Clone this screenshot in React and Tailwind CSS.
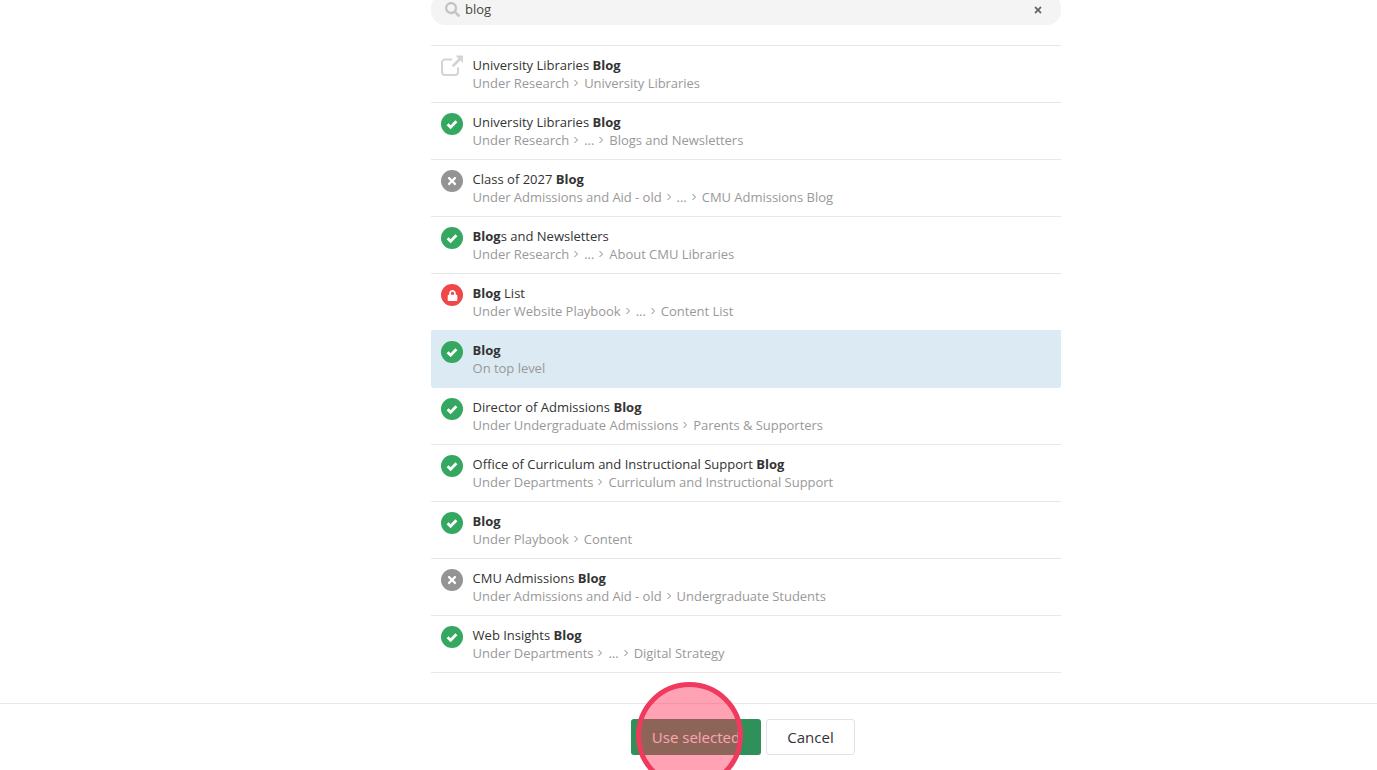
import { FaTimes, FaLock, FaSearch } from "react-icons/fa"

const rows = [
  { icon: "link", title: ["University Libraries ", <b key="b">Blog</b>], path: ["Under Research", "University Libraries"] },
  { icon: "ok", title: ["University Libraries ", <b key="b">Blog</b>], path: ["Under Research", "...", "Blogs and Newsletters"] },
  { icon: "off", title: ["Class of 2027 ", <b key="b">Blog</b>], path: ["Under Admissions and Aid - old", "...", "CMU Admissions Blog"] },
  { icon: "ok", title: [<b key="b">Blog</b>, "s and Newsletters"], path: ["Under Research", "...", "About CMU Libraries"] },
  { icon: "lock", title: [<b key="b">Blog</b>, " List"], path: ["Under Website Playbook", "...", "Content List"] },
  { icon: "ok", title: [<b key="b">Blog</b>], text: "On top level", selected: true },
  { icon: "ok", title: ["Director of Admissions ", <b key="b">Blog</b>], path: ["Under Undergraduate Admissions", "Parents & Supporters"] },
  { icon: "ok", title: ["Office of Curriculum and Instructional Support ", <b key="b">Blog</b>], path: ["Under Departments", "Curriculum and Instructional Support"] },
  { icon: "ok", title: [<b key="b">Blog</b>], path: ["Under Playbook", "Content"] },
  { icon: "off", title: ["CMU Admissions ", <b key="b">Blog</b>], path: ["Under Admissions and Aid - old", "Undergraduate Students"] },
  { icon: "ok", title: ["Web Insights ", <b key="b">Blog</b>], path: ["Under Departments", "...", "Digital Strategy"] },
]

function StatusIcon({ type }) {
  if (type === "link") {
    return (
      <svg width="24" height="22" viewBox="0 0 24 22" fill="none" className="text-[#d4d4d4] -mt-[1px] -ml-[1px]">
        <path d="M18 12.5V17a3 3 0 0 1-3 3H5a3 3 0 0 1-3-3V7.5a3 3 0 0 1 3-3h7" stroke="currentColor" strokeWidth="2" />
        <path d="M15.5 0.5H23V8l-2.6-2.6-6.7 6.9-2-2 6.8-6.9z" fill="currentColor" />
      </svg>
    )
  }
  const bg = type === "ok" ? "bg-[#34a761]" : type === "off" ? "bg-[#949494]" : "bg-[#f04747]"
  return (
    <div className={`w-[22px] h-[22px] rounded-full flex items-center justify-center text-white ${bg}`}>
      {type === "ok" && (
        <svg width="14" height="12" viewBox="0 0 14 12" fill="none">
          <path d="M2.6 6.2l3 3 5.8-6" stroke="currentColor" strokeWidth="2.8" />
        </svg>
      )}
      {type === "off" && <FaTimes size={12} />}
      {type === "lock" && <FaLock size={11} />}
    </div>
  )
}

function Row({ row }) {
  return (
    <div className={`flex border-b pl-[10px] ${row.selected ? "bg-[#dbeaf3] border-[#dbeaf3] rounded-[3px] -mt-[1px] h-[58px] pt-[11px]" : "h-[57px] pt-[10px] border-[#e8e8e8]"}`}>
      <div className="w-[31.6px] shrink-0">
        <StatusIcon type={row.icon} />
      </div>
      <div className="text-[13px] leading-[18px]">
        <div className="text-[#333] [&_b]:font-bold">{row.title}</div>
        <div className="text-[#999] flex items-center tracking-[-0.03px]">
          {row.text}
          {row.path &&
            row.path.map((p, i) => (
              <span key={i} className="flex items-center">
                {i > 0 && (
                  <svg width="15" height="10" viewBox="0 0 15 10" fill="none" className="text-[#888]">
                    <path d="M5.5 2l3 3-3 3" stroke="currentColor" strokeWidth="1" />
                  </svg>
                )}
                {p}
              </span>
            ))}
        </div>
      </div>
    </div>
  )
}

export default function App() {
  return (
    <div className="relative h-[770px] overflow-hidden bg-white flex flex-col font-['Open_Sans',sans-serif]">
      <div className="flex-1 pl-[115px]">
        <div className="w-[630px] mx-auto">
          <div className="h-[31px] -mt-[6px] rounded-[14px] bg-[#f4f4f4] flex items-center pl-[14px] pr-[18px] text-[13px] text-[#444]">
            <FaSearch size={15} className="text-[#c4c4c4] mr-[5px]" />
            <span className="flex-1">blog</span>
            <FaTimes size={10} className="text-[#666]" />
          </div>
          <div className="mt-[20px] border-t border-[#e8e8e8]">
            {rows.map((row, i) => (
              <Row key={i} row={row} />
            ))}
          </div>
        </div>
      </div>
      <div className="h-[67px] border-t border-[#e8e8e8] flex justify-center gap-[5px] pt-[15px] pl-[109px] text-[15px]">
        <button className="w-[130px] h-[36px] rounded-[3px] bg-[#2f9159] text-white">Use selected</button>
        <button className="w-[89px] h-[36px] rounded-[3px] border border-[#e2e2e2] text-[#333]">Cancel</button>
      </div>
      <div className="absolute left-[636px] top-[682px] w-[107px] h-[107px] rounded-full border-[5px] border-[#ef3a5e] bg-[#ff3057]/45"></div>
    </div>
  )
}
